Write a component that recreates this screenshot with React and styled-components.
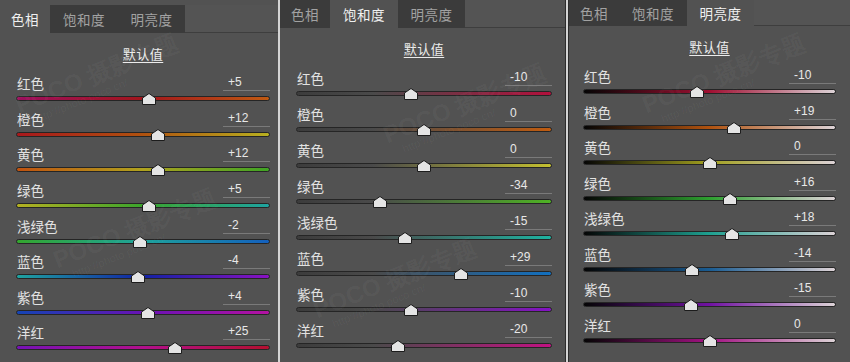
import React from 'react'
import styled, { createGlobalStyle } from 'styled-components'

// Styles //
const GlobalStyle = createGlobalStyle`
  html, body {
    margin: 0;
    padding: 0;
    background: #d4d4d4;
  }
  body {
    width: 850px;
    height: 362px;
    overflow: hidden;
    font-family: "Noto Sans CJK SC", "Noto Sans", sans-serif;
  }
`

const Board = styled.div`
  display: flex;
  gap: 2px;
  width: 850px;
  height: 362px;
  background: #d4d4d4;
`

const Panel = styled.section`
  position: relative;
  flex: none;
  width: ${p => p.$w}px;
  height: 362px;
  box-sizing: border-box;
  padding-top: ${p => p.$top}px;
  background: #525252;
  overflow: hidden;
  border-left: ${p => (p.$edge === 'left' ? '1px solid #2c2c2c' : 'none')};
  border-right: ${p => (p.$edge === 'right' ? '1px solid #2c2c2c' : 'none')};
`

const TabBar = styled.div`
  display: flex;
  height: ${p => p.$h}px;
`

const Tab = styled.div`
  flex: none;
  width: ${p => p.$w}px;
  display: flex;
  align-items: center;
  justify-content: center;
  font-size: 13.5px;
  letter-spacing: 0.5px;
  background: ${p => (p.$active ? '#525252' : '#3b3b3b')};
  color: ${p => (p.$active ? '#f0f0f0' : '#a2a2a2')};
`

const TabFill = styled.div`
  flex: 1;
  box-sizing: border-box;
  border-bottom: 1px solid #3e3e3e;
  background: #545454;
`

const Body = styled.div`
  padding-left: ${p => p.$pad}px;
  width: ${p => p.$cw}px;
`

const Title = styled.div`
  margin-top: 10px;
  height: 21px;
  line-height: 21px;
  text-align: center;
  font-size: 13px;
  color: #ececec;
  text-decoration: underline;
  text-underline-offset: 3px;
  letter-spacing: 0.5px;
`

const Rows = styled.div`
  margin-top: 10px;
`

const Row = styled.div`
  height: ${p => p.$pitch}px;
`

const Head = styled.div`
  display: flex;
  justify-content: space-between;
  align-items: flex-start;
  height: 18px;
`

const Label = styled.span`
  font-size: 13.5px;
  line-height: 18px;
  color: #e2e2e2;
  padding-left: 1px;
`

const ValueField = styled.span`
  width: 47px;
  height: 17px;
  box-sizing: border-box;
  padding-left: 5px;
  border-bottom: 1px solid #7a7a7a;
  font-family: "Liberation Sans", Arial, sans-serif;
  font-size: 12px;
  line-height: 16px;
  color: #e8e8e8;
`

const SliderArea = styled.div`
  position: relative;
  height: 13px;
`

const Track = styled.div`
  position: relative;
  top: 4px;
  height: 5px;
  box-sizing: border-box;
  border: 1px solid #252525;
  border-radius: 3px;
  background: ${p => p.$bg};
`

const Thumb = styled.svg`
  position: absolute;
  top: 1px;
  width: 14px;
  height: 12px;
  transform: translateX(-50%);
`

const Stamp = styled.div`
  position: absolute;
  pointer-events: none;
  transform: rotate(-22deg);
  transform-origin: left top;
  color: rgba(255, 255, 255, 0.045);
  white-space: nowrap;
  line-height: 1;
  > b {
    display: block;
    font-family: "Liberation Sans", Arial, sans-serif;
    font-size: 24px;
    font-weight: 700;
  }
  > i {
    display: block;
    font-style: normal;
    font-family: "Liberation Sans", Arial, sans-serif;
    font-size: 11px;
    margin-left: 12px;
    margin-top: 2px;
  }
`

// Data //
const labels = ['红色', '橙色', '黄色', '绿色', '浅绿色', '蓝色', '紫色', '洋红']

const hue = [
  ['#9c0f5e', '#a2161c', '#c05a12'],
  ['#a8181c', '#b0520f', '#b8b020'],
  ['#c0520f', '#b0a21e', '#3fa424'],
  ['#b4b021', '#3aa42c', '#1ea3a0'],
  ['#34a62e', '#1ea39c', '#1460be'],
  ['#1ea3a0', '#1222a4', '#8a12c2'],
  ['#1444b4', '#6812b4', '#b412a2'],
  ['#7612b6', '#b2108c', '#b41030']
]

const sat = ['#b2103c', '#c05c10', '#c4c030', '#4eb224', '#1eb2a0', '#1270c0', '#8412c4', '#c21282']

const lum = ['#a01032', '#b0520f', '#a2a020', '#2ea030', '#1ea090', '#1a5c92', '#7012a2', '#a21282']

const hueBg = c => `linear-gradient(90deg, ${c[0]} 0%, ${c[1]} 50%, ${c[2]} 100%)`
const satBg = c => `linear-gradient(90deg, #3c3c3c 0%, #4a4a4a 30%, ${c} 100%)`
const lumBg = c => `linear-gradient(90deg, #050505 0%, ${c} 50%, #dcd2d6 100%)`

const panels = [
  {
    w: 278, top: 5, tabH: 28, pad: 16, cw: 254, pitch: 35.65, active: 0,
    values: ['+5', '+12', '+12', '+5', '-2', '-4', '+4', '+25'],
    bgs: hue.map(hueBg),
    stamps: [[12, 95], [50, 250]]
  },
  {
    w: 286, top: 0, tabH: 28, pad: 16, cw: 256, pitch: 36.07, active: 1, edge: 'right',
    values: ['-10', '0', '0', '-34', '-15', '+29', '-10', '-20'],
    bgs: sat.map(c => satBg(c)),
    stamps: [[100, 125], [30, 300]]
  },
  {
    w: 282, top: 0, tabH: 26, pad: 14, cw: 253, pitch: 35.5, active: 2, edge: 'left',
    values: ['-10', '+19', '0', '+16', '+18', '-14', '-15', '0'],
    bgs: lum.map(lumBg),
    stamps: [[70, 95]]
  }
]

const tabs = [['色相', 50], ['饱和度', 68], ['明亮度', 67]]

const pct = v => ((parseInt(v, 10) + 100) / 200) * 100

function Slider({ label, value, bg, pitch }) {
  return (
    <Row $pitch={pitch}>
      <Head>
        <Label>{label}</Label>
        <ValueField>{value}</ValueField>
      </Head>
      <SliderArea>
        <Track $bg={bg} />
        <Thumb viewBox="0 0 14 12" style={{ left: `${pct(value)}%` }}>
          <polygon points="0.5,5 7,0.5 13.5,5 13.5,11.5 0.5,11.5" fill="#e4e4e4" stroke="#1c1c1c" strokeWidth="1" />
        </Thumb>
      </SliderArea>
    </Row>
  )
}

export default function App() {
  return (
    <>
      <GlobalStyle />
      <Board>
        {panels.map((p, i) => (
          <Panel key={i} $w={p.w} $top={p.top} $edge={p.edge}>
            <TabBar $h={p.tabH}>
              {tabs.map(([t, w], j) => (
                <Tab key={t} $w={w} $active={j === p.active}>{t}</Tab>
              ))}
              <TabFill />
            </TabBar>
            <Body $pad={p.pad} $cw={p.cw}>
              <Title>默认值</Title>
              <Rows>
                {labels.map((l, k) => (
                  <Slider key={l} label={l} value={p.values[k]} bg={p.bgs[k]} pitch={p.pitch} />
                ))}
              </Rows>
            </Body>
            {p.stamps.map(([x, y], k) => (
              <Stamp key={k} style={{ left: x, top: y }}>
                <b>POCO 摄影专题</b>
                <i>http://photo.poco.cn/</i>
              </Stamp>
            ))}
          </Panel>
        ))}
      </Board>
    </>
  )
}
